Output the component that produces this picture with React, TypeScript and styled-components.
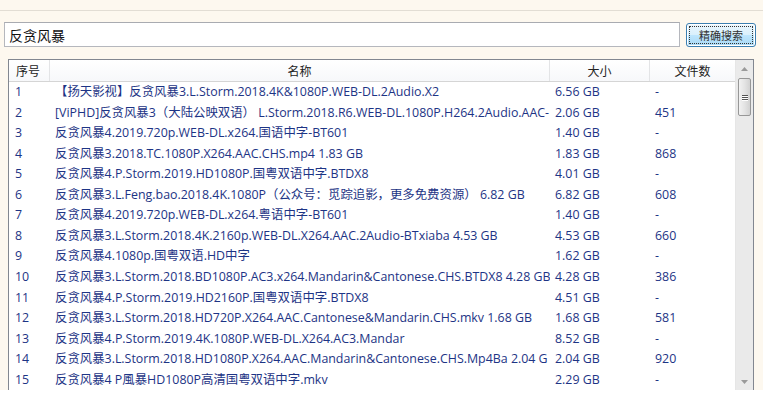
import * as React from 'react';
import styled, {createGlobalStyle} from 'styled-components';

const GlobalStyle = createGlobalStyle`
	html, body {
		margin: 0;
		padding: 0;
		background: #fdf8ef;
		overflow: hidden;
	}
	body {
		font-family: "Open Sans", "Noto Sans CJK SC", sans-serif;
	}
`;

const Page = styled.div`
	width: 763px;
	height: 412px;
	display: flex;
	flex-direction: column;
	background: #fdf8ef;
`;

const TopRule = styled.div`
	height: 10px;
	border-bottom: 1px solid #e2ddd4;
	flex-shrink: 0;
`;

const SearchBar = styled.div`
	display: flex;
	align-items: center;
	gap: 6px;
	padding: 11px 7px 0 4px;
	height: 25px;
	flex-shrink: 0;
`;

const SearchInput = styled.input`
	flex: 1;
	height: 25px;
	box-sizing: border-box;
	border: 1px solid #b5b7bd;
	border-top-color: #a9abb1;
	background: #fff;
	padding: 0 4px;
	font-family: "Noto Sans CJK SC", sans-serif;
	font-size: 14px;
	color: #111;
	outline: none;
`;

const SearchButton = styled.button`
	width: 70px;
	height: 24px;
	box-sizing: border-box;
	border: 1px solid #3c7fb1;
	border-radius: 3px;
	background: linear-gradient(#eaf6fd, #d9f0fc 50%, #bee6fd 51%, #a7d9f5);
	box-shadow: inset 0 0 0 1px #fff;
	padding: 2px;
	font-family: "Noto Sans CJK SC", sans-serif;
	font-size: 11px;
	color: #333;
	cursor: pointer;
	span {
		display: flex;
		height: 100%;
		align-items: center;
		justify-content: center;
		border: 1px dotted #333;
		box-sizing: border-box;
	}
`;

const ListBox = styled.div`
	margin: 12px 9px 0 8px;
	height: 330px;
	border: 1px solid #828790;
	border-bottom: none;
	background: #fff;
	display: flex;
	flex-shrink: 0;
`;

const Grid = styled.div`
	flex: 1;
	display: flex;
	flex-direction: column;
	overflow: hidden;
`;

const cols = '41px 500px 100px 1fr';

const HeaderRow = styled.div`
	display: grid;
	grid-template-columns: ${cols};
	height: 21px;
	border-bottom: 1px solid #d5d5d5;
	background: linear-gradient(#fff, #f7f8fa);
	font-family: "Noto Sans CJK SC", sans-serif;
	font-size: 12px;
	color: #222;
`;

const HeaderCell = styled.div<{$align?: string}>`
	display: flex;
	align-items: center;
	justify-content: ${p => p.$align || 'center'};
	padding-left: ${p => (p.$align === 'flex-start' ? '7px' : '0')};
	border-right: 1px solid #e3e4e6;
	&:last-child {
		border-right: none;
	}
`;

const Row = styled.div`
	display: grid;
	grid-template-columns: ${cols};
	height: 20.75px;
	align-items: center;
	font-size: 12.4px;
	color: #1d3485;
	white-space: nowrap;
`;

const Cell = styled.div<{$pad?: number}>`
	padding-left: ${p => p.$pad ?? 6}px;
	overflow: hidden;
	line-height: 20px;
`;

const ScrollBar = styled.div`
	width: 17px;
	flex-shrink: 0;
	background: #eaeaea;
	border-left: 1px solid #e6e6e6;
	display: flex;
	flex-direction: column;
	align-items: center;
`;

const Arrow = styled.div<{$down?: boolean}>`
	height: 17px;
	width: 100%;
	display: flex;
	align-items: center;
	justify-content: center;
	svg {
		transform: ${p => (p.$down ? 'rotate(180deg)' : 'none')};
	}
`;

const Thumb = styled.div`
	width: 13px;
	height: 38px;
	box-sizing: border-box;
	border: 1px solid #979797;
	border-radius: 2px;
	background: linear-gradient(90deg, #f2f2f2, #e4e4e4 50%, #d2d2d2);
	display: flex;
	flex-direction: column;
	align-items: center;
	justify-content: center;
	gap: 1px;
	margin-top: 1px;
	i {
		width: 6px;
		height: 1px;
		background: #555;
		box-shadow: 0 1px 0 #fff;
	}
`;

const Spacer = styled.div`
	flex: 1;
`;

const Bottom = styled.div`
	flex: 1;
	background: #fff;
`;

const ArrowIcon = () => (
	<svg width="7" height="4" viewBox="0 0 7 4">
		<path d="M0 4 L3.5 0 L7 4 Z" fill="#9a9a9a" />
	</svg>
);

// names are cut where the column ends in the original list
const rows: [string, string, string][] = [
	['\u3010扬天影视\u3011反贪风暴3.L.Storm.2018.4K&1080P.WEB-DL.2Audio.X2', '6.56 GB', '-'],
	['[ViPHD]反贪风暴3\uff08大陆公映双语\uff09 L.Storm.2018.R6.WEB-DL.1080P.H264.2Audio.AAC-', '2.06 GB', '451'],
	['反贪风暴4.2019.720p.WEB-DL.x264.国语中字-BT601', '1.40 GB', '-'],
	['反贪风暴3.2018.TC.1080P.X264.AAC.CHS.mp4 1.83 GB', '1.83 GB', '868'],
	['反贪风暴4.P.Storm.2019.HD1080P.国粤双语中字.BTDX8', '4.01 GB', '-'],
	['反贪风暴3.L.Feng.bao.2018.4K.1080P\uff08公众号\uff1a觅踪追影\uff0c更多免费资源\uff09 6.82 GB', '6.82 GB', '608'],
	['反贪风暴4.2019.720p.WEB-DL.x264.粤语中字-BT601', '1.40 GB', '-'],
	['反贪风暴3.L.Storm.2018.4K.2160p.WEB-DL.X264.AAC.2Audio-BTxiaba 4.53 GB', '4.53 GB', '660'],
	['反贪风暴4.1080p.国粤双语.HD中字', '1.62 GB', '-'],
	['反贪风暴3.L.Storm.2018.BD1080P.AC3.x264.Mandarin&Cantonese.CHS.BTDX8 4.28 GB', '4.28 GB', '386'],
	['反贪风暴4.P.Storm.2019.HD2160P.国粤双语中字.BTDX8', '4.51 GB', '-'],
	['反贪风暴3.L.Storm.2018.HD720P.X264.AAC.Cantonese&Mandarin.CHS.mkv 1.68 GB', '1.68 GB', '581'],
	['反贪风暴4.P.Storm.2019.4K.1080P.WEB-DL.X264.AC3.Mandar', '8.52 GB', '-'],
	['反贪风暴3.L.Storm.2018.HD1080P.X264.AAC.Mandarin&Cantonese.CHS.Mp4Ba 2.04 G', '2.04 GB', '920'],
	['反贪风暴4 P風暴HD1080P高清国粤双语中字.mkv', '2.29 GB', '-'],
];

export default function App() {
	return (
		<Page>
			<GlobalStyle />
			<TopRule />
			<SearchBar>
				<SearchInput defaultValue="反贪风暴" />
				<SearchButton>
					<span>精确搜索</span>
				</SearchButton>
			</SearchBar>
			<ListBox>
				<Grid>
					<HeaderRow>
						<HeaderCell $align="flex-start">序号</HeaderCell>
						<HeaderCell>名称</HeaderCell>
						<HeaderCell>大小</HeaderCell>
						<HeaderCell>文件数</HeaderCell>
					</HeaderRow>
					{rows.map(([name, size, count], i) => (
						<Row key={i}>
							<Cell $pad={6}>{i + 1}</Cell>
							<Cell $pad={5}>{name}</Cell>
							<Cell $pad={5}>{size}</Cell>
							<Cell $pad={5}>{count}</Cell>
						</Row>
					))}
				</Grid>
				<ScrollBar>
					<Arrow>
						<ArrowIcon />
					</Arrow>
					<Thumb>
						<i />
						<i />
						<i />
					</Thumb>
					<Spacer />
					<Arrow $down>
						<ArrowIcon />
					</Arrow>
				</ScrollBar>
			</ListBox>
			<Bottom />
		</Page>
	);
}
